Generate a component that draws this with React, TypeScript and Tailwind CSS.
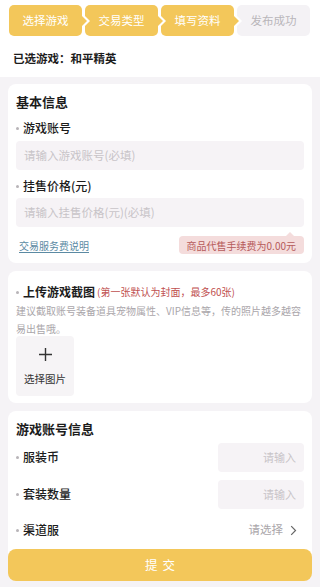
import React from "react";

function Step({ label, active, first, last }: { label: string; active: boolean; first?: boolean; last?: boolean }) {
  return (
    <div
      className={`relative flex h-[31px] w-[73px] items-center justify-center rounded-[5px] text-[11.5px] ${
        active ? "bg-[#f3c75a] text-white" : "bg-[#f4f2f5] text-[#b9b6ba]"
      }`}
    >
      {!first && (
        <span className="absolute left-0 top-1/2 h-0 w-0 -translate-y-1/2 border-y-[5px] border-l-[5px] border-y-transparent border-l-white" />
      )}
      {label}
      {!last && (
        <span className="absolute right-[-5px] top-1/2 z-10 h-0 w-0 -translate-y-1/2 border-y-[5px] border-l-[5px] border-y-transparent border-l-[#f3c75a]" />
      )}
    </div>
  );
}

function Dot() {
  return <span className="mr-[4px] inline-block h-[3px] w-[3px] rounded-full bg-[#b8b4b8]" />;
}

export default function App() {
  return (
    <div
      className="min-h-[587px] w-[320px] bg-[#f5f3f6] text-[#1c1c1c]"
      style={{ fontFamily: '"Noto Sans CJK SC", "Noto Sans", sans-serif' }}
    >
      <div className="bg-white px-[9px] pt-[5px] pb-[10px]">
        <div className="flex gap-[3px]">
          <Step label="选择游戏" active first />
          <Step label="交易类型" active />
          <Step label="填写资料" active />
          <Step label="发布成功" active={false} last />
        </div>
        <div className="mt-[13px] pl-[4px] text-[11.5px] font-bold leading-[18px]">已选游戏：和平精英</div>
      </div>

      <div className="mx-[8px] mt-[7px] rounded-[8px] bg-white px-[8px] pt-[8px] pb-[9px]">
        <div className="text-[13px] font-bold leading-[20px]">基本信息</div>
        <div className="mt-[7px] flex items-center text-[12px] font-medium leading-[18px]">
          <Dot />游戏账号
        </div>
        <div className="mt-[4px] flex h-[29px] items-center rounded-[4px] bg-[#f6f3f6] px-[8px] text-[11.5px] text-[#c8c4c8]">
          请输入游戏账号(必填)
        </div>
        <div className="mt-[7px] flex items-center text-[12px] font-medium leading-[18px]">
          <Dot />挂售价格(元)
        </div>
        <div className="mt-[3px] flex h-[29px] items-center rounded-[4px] bg-[#f6f3f6] px-[8px] text-[11.5px] text-[#c8c4c8]">
          请输入挂售价格(元)(必填)
        </div>
        <div className="mt-[9px] flex items-center justify-between">
          <span className="pl-[3px] text-[10px] text-[#5b8aa3] underline underline-offset-2">交易服务费说明</span>
          <div className="relative flex h-[18px] items-center rounded-[4px] bg-[#f4dcdc] px-[8px] text-[10px] text-[#b65a5a]">
            <span className="absolute right-[10px] top-[-4px] h-0 w-0 border-x-[4px] border-b-[4px] border-x-transparent border-b-[#f4dcdc]" />
            商品代售手续费为0.00元
          </div>
        </div>
      </div>

      <div className="mx-[8px] mt-[8px] rounded-[8px] bg-white px-[8px] pt-[12px] pb-[7px]">
        <div className="flex items-center leading-[18px]">
          <Dot />
          <span className="text-[12px] font-bold">上传游戏截图</span>
          <span className="ml-[2px] text-[10px] text-[#c0504f]">(第一张默认为封面，最多60张)</span>
        </div>
        <div className="mt-[1px] text-[10px] leading-[18px] text-[#aaa6aa]">
          建议截取账号装备道具宠物属性、VIP信息等，传的照片越多越容易出售哦。
        </div>
        <div className="-mt-[2px] flex h-[60px] w-[58px] flex-col items-center justify-center rounded-[4px] bg-[#f6f4f6]">
          <svg width="15" height="15" viewBox="0 0 15 15" className="mt-[1px]">
            <path d="M7.5 1v13M1 7.5h13" stroke="#333" strokeWidth="1.4" />
          </svg>
          <span className="mt-[9px] text-[10.5px] text-[#333]">选择图片</span>
        </div>
      </div>

      <div className="mx-[8px] mt-[8px] rounded-[8px] bg-white px-[8px] pt-[8px] pb-[16px]">
        <div className="text-[13px] font-bold leading-[20px]">游戏账号信息</div>
        <div className="mt-[3px] flex h-[30px] items-center justify-between">
          <div className="flex items-center text-[12px] font-medium">
            <Dot />服装币
          </div>
          <div className="flex h-[29px] w-[86px] items-center justify-end rounded-[4px] bg-[#f6f3f6] px-[8px] text-[11px] text-[#c8c4c8]">
            请输入
          </div>
        </div>
        <div className="mt-[7px] flex h-[30px] items-center justify-between">
          <div className="flex items-center text-[12px] font-medium">
            <Dot />套装数量
          </div>
          <div className="flex h-[29px] w-[86px] items-center justify-end rounded-[4px] bg-[#f6f3f6] px-[8px] text-[11px] text-[#c8c4c8]">
            请输入
          </div>
        </div>
        <div className="mt-[6px] flex h-[30px] items-center justify-between">
          <div className="flex items-center text-[12px] font-medium">
            <Dot />渠道服
          </div>
          <div className="flex items-center pr-[7px] text-[11.5px] text-[#aaa6aa]">
            请选择
            <svg width="7" height="11" viewBox="0 0 7 11" className="ml-[7px]">
              <path d="M1.2 1.2l4.3 4.3-4.3 4.3" fill="none" stroke="#666" strokeWidth="1.2" />
            </svg>
          </div>
        </div>
      </div>

      <div className="relative z-10 mx-[8px] -mt-[12px] flex h-[32px] items-center justify-center rounded-[8px] bg-[#f3c75a] pl-[5px] text-[12.5px] tracking-[5px] text-white">
        提交
      </div>
    </div>
  );
}
